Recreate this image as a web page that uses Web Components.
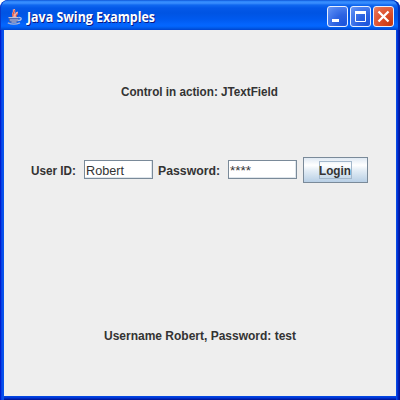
<!DOCTYPE html>
<html lang="en"><head><meta charset="utf-8"><title>Java Swing Examples</title>
<style>html,body{margin:0;width:400px;height:400px;overflow:hidden;background:#fff}</style></head>
<body>
<swing-frame>
  <title-bar slot="title">
    <java-icon slot="icon"></java-icon>
    <fit-text width="128">Java Swing Examples</fit-text>
    <window-button slot="buttons" kind="min"></window-button>
    <window-button slot="buttons" kind="max"></window-button>
    <window-button slot="buttons" kind="close"></window-button>
  </title-bar>
  <swing-label><fit-text width="157">Control in action: JTextField</fit-text></swing-label>
  <flow-panel>
    <fit-text width="45">User ID:</fit-text>
    <text-field><fit-text width="38">Robert</fit-text></text-field>
    <fit-text width="62">Password:</fit-text>
    <text-field><fit-text width="21">****</fit-text></text-field>
    <swing-button><fit-text width="32">Login</fit-text></swing-button>
  </flow-panel>
  <swing-label><fit-text width="192">Username Robert, Password: test</fit-text></swing-label>
</swing-frame>
<script>
const define = (name, html, init) => customElements.define(name, class extends HTMLElement {
  connectedCallback() {
    if (this.shadowRoot) return;
    this.attachShadow({mode: 'open'}).innerHTML = html;
    if (init) init(this, this.shadowRoot);
  }
});

define('swing-frame', `<style>
:host{display:flex;flex-direction:column;box-sizing:border-box;width:400px;height:400px;padding:0 4px 4px;border-radius:8px 8px 0 0;overflow:hidden;
 background:linear-gradient(90deg,#001dcf 0,#001dcf 1px,#0439e4 1px,#0855ee 3px,#0450e8 4px,transparent 4px,transparent 396px,#0450e8 396px,#0642e0 397px,#0023c4 398px,#00138c 400px),linear-gradient(#0345e2 396px,#0345e2 397px,#0030d0 398px,#00138c 400px);
 font:bold 12px/16px "Liberation Sans",Arial,sans-serif;color:#333}
main{flex:1;display:grid;grid-template-rows:repeat(3,122px);background:#eee}
</style><slot name="title"></slot><main><slot></slot></main>`);

define('title-bar', `<style>
:host{display:flex;align-items:center;box-sizing:border-box;height:30px;margin:0 -4px;padding:3px 6px 0 7px;
 background:linear-gradient(#0848cc 0,#2a83fa 1px,#3c90ff 3px,#1068f0 5px,#0458e8 8px,#0054e3 13px,#0059ee 19px,#0364fc 24px,#0366ff 26px,#005ae8 28px,#0043cf 30px);
 border-radius:8px 8px 0 0;box-shadow:inset 1px 0 #0838c8,inset -2px 0 #0030b8;
 font:bold 13.5px/18px "Open Sans","Noto Sans",sans-serif;color:#fff;text-shadow:1px 1px #0a1883}
.title{margin-left:4px;flex:1}.buttons{display:flex;gap:2px}
</style><slot name="icon"></slot><span class="title"><slot></slot></span><span class="buttons"><slot name="buttons"></slot></span>`);

define('java-icon', `<style>:host{display:block;width:16px;height:16px}svg{display:block}</style>
<svg width="16" height="16" viewBox="0 0 16 16" fill="none">
<path d="M7.5 8C3.8 5 8.5 4.4 6.7.3M9 8c-2.7-2.4 1.8-2.1.6-5" stroke="#f8b0a0" stroke-width="2.4"/>
<path d="M6.2 7.4C4.3 5 8 4.2 7.2 1M9.5 7.5c-1-1.8 1.2-1.8.9-3" stroke="#dc4c40" stroke-width="1.2"/>
<path d="M1.5 8.5H11.5v3q-1 2.5-3.5 2.5H5.5Q3 14 2 11.5Z" fill="#5069ae"/>
<path d="M1.5 8.5h10M3 11h8M4.5 13h5" stroke="#b9c0dc"/>
<path d="M11.5 8.5c4-.5 3.3 3-.7 3" stroke="#aebae0" stroke-width="1.4"/>
<path d="M.8 13.8q6 2.8 12.2 0" stroke="#a9b3d6" stroke-width="1.3"/></svg>`);

define('window-button', `<style>
:host{display:block;box-sizing:border-box;width:21px;height:21px;border:1px solid #e8efff;border-radius:3px;background:radial-gradient(circle at 85% 90%,#1c55dc 0,#2d63e2 40%,#4c80ef 75%,#7ba2f4 110%)}
:host([kind=close]){background:radial-gradient(circle at 85% 90%,#c83a12 0,#dc4e2a 45%,#e36a4b 80%,#f09a80 110%)}
svg{display:block}</style><svg width="19" height="19" fill="none" stroke="#fff"></svg>`, (el, root) => {
  root.querySelector('svg').innerHTML = {
    min: '<path d="M4 13.5h7" stroke-width="3"/>',
    max: '<path d="M4.5 4v10.5h10V4" stroke-width="1"/><path d="M4 5.5h11" stroke-width="3"/>',
    close: '<path d="M4.5 4.5l10 10M14.5 4.5l-10 10" stroke-width="2.3"/>'
  }[el.getAttribute('kind')];
});

define('swing-label', `<style>:host{display:flex;align-items:center;justify-content:center;padding:1px 1px 0 0}</style><slot></slot>`);

define('flow-panel', `<style>:host{display:grid;grid-template-columns:48px 69px 65px 70px 65px;column-gap:5px;align-items:center;align-content:start;padding:5px 0 0 27px;grid-template-rows:26px}::slotted(fit-text){margin-top:1px}</style><slot></slot>`);

define('text-field', `<style>:host{display:block;box-sizing:border-box;width:69px;height:19px;margin-bottom:1px;border:1px solid #7a8a99;background:#fff;padding:2px 0 0 1px;font-weight:normal;line-height:16px;box-shadow:inset -1px -1px #dfe6ec}</style><slot></slot>`);

define('swing-button', `<style>:host{display:flex;align-items:center;justify-content:center;box-sizing:border-box;width:65px;height:26px;border:1px solid #7a8a99;background:linear-gradient(#dfe9f3,#fff 30%,#e5eef6 50%,#b8cfe5)}
span{display:flex;align-items:center;justify-content:center;box-sizing:border-box;width:33px;height:18px;border:1px solid #a3b8cc;padding:1px 1px 0 0}</style><span><slot></slot></span>`);

define('fit-text', `<style>:host{display:block;flex:none;white-space:nowrap}span{display:inline-block;transform-origin:0 50%}</style><span><slot></slot></span>`, (el, root) => {
  const w = +el.getAttribute('width'), s = root.querySelector('span');
  el.style.width = w + 'px';
  s.style.transform = `scaleX(${w / s.getBoundingClientRect().width})`;
});
</script>
</body></html>
